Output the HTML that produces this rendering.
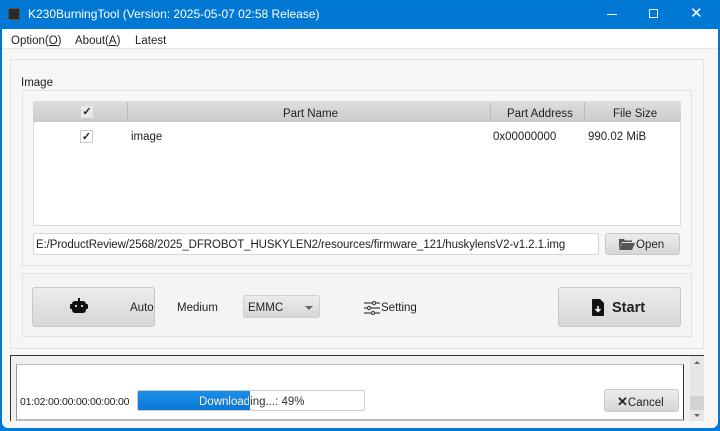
<!DOCTYPE html>
<html><head><meta charset="utf-8"><style>
*{margin:0;padding:0;box-sizing:border-box}
body{width:720px;height:431px;overflow:hidden;background:#0078d4;font-family:"Liberation Sans",sans-serif;font-size:11px;color:#222;position:relative}
.a{position:absolute}
.btn{background:linear-gradient(#ececec,#d6d6d6);border:1px solid #c8c8c8;border-radius:3px}
</style></head><body>
<div class="a" style="left:0;top:0;width:720px;height:29px;background:#0078d4"></div>
<div class="a" style="left:8px;top:8px;width:12px;height:12px;background:#2b2b2b;border:1px solid #555"></div>
<div class="a" style="left:28px;top:7px;color:#fff;font-size:12px">K230BurningTool (Version: 2025-05-07 02:58 Release)</div>
<div class="a" style="left:607px;top:14px;width:10px;height:1px;background:#fff"></div>
<div class="a" style="left:649px;top:9px;width:9px;height:9px;border:1px solid #fff"></div>
<div class="a" style="left:690px;top:4px;color:#fff;font-size:15px">✕</div>
<div class="a" style="left:2px;top:29px;width:716px;height:399px;background:#f7f7f7;border-radius:0 0 6px 6px"></div>
<div class="a" style="left:2px;top:29px;width:716px;height:20px;background:#fff;border-bottom:1px solid #e6e6e6"></div>
<div class="a" style="left:11px;top:35px;font-size:11.5px">Option(<u>O</u>)</div>
<div class="a" style="left:75px;top:35px;font-size:11.5px">About(<u>A</u>)</div>
<div class="a" style="left:135px;top:35px;font-size:11.5px">Latest</div>
<div class="a" style="left:10px;top:59px;width:694px;height:290px;border:1px solid #e4e4e4;background:#f6f6f6"></div>
<div class="a" style="left:21px;top:77px;font-size:11.5px">Image</div>
<div class="a" style="left:22px;top:90px;width:670px;height:176px;border:1px solid #e2e2e2;background:#f7f7f7"></div>
<div class="a" style="left:33px;top:101px;width:648px;height:125px;background:#fff;border:1px solid #ddd"></div>
<div class="a" style="left:33px;top:101px;width:648px;height:21px;background:linear-gradient(#dedede,#cbcbcb)"></div>
<div class="a" style="left:127px;top:102px;width:1px;height:20px;background:#bbb"></div>
<div class="a" style="left:490px;top:102px;width:1px;height:20px;background:#bbb"></div>
<div class="a" style="left:584px;top:102px;width:1px;height:20px;background:#bbb"></div>
<div class="a" style="left:81px;top:106px;width:12px;height:12px;background:#e8e8e8;font-size:11px;line-height:12px;text-align:center;font-weight:bold">✓</div>
<div class="a" style="left:283px;top:108px;font-size:11.5px">Part Name</div>
<div class="a" style="left:507px;top:108px;font-size:11.5px">Part Address</div>
<div class="a" style="left:613px;top:108px;font-size:11.5px">File Size</div>
<div class="a" style="left:80px;top:130px;width:13px;height:13px;border:1px solid #ccc;background:#fff;font-size:11px;line-height:12px;text-align:center;font-weight:bold">✓</div>
<div class="a" style="left:131px;top:131px;font-size:11.5px">image</div>
<div class="a" style="left:493px;top:131px;font-size:11.5px">0x00000000</div>
<div class="a" style="left:588px;top:131px;font-size:11.5px">990.02 MiB</div>
<div class="a" style="left:33px;top:233px;width:566px;height:22px;background:#fff;border:1px solid #d6d6d6;border-radius:2px"></div>
<div class="a" style="left:36px;top:239px;font-size:11.5px;letter-spacing:-0.1px">E:/ProductReview/2568/2025_DFROBOT_HUSKYLEN2/resources/firmware_121/huskylensV2-v1.2.1.img</div>
<div class="a btn" style="left:605px;top:233px;width:75px;height:22px"></div>
<svg class="a" style="left:619px;top:238px" width="16" height="12" viewBox="0 0 16 12"><path d="M0 1H5L6 2.5H13V4H3L0 11Z" fill="#555"/><path d="M3 5H16L13 12H0Z" fill="#555"/></svg>
<div class="a" style="left:636px;top:239px;font-size:11.5px">Open</div>
<div class="a" style="left:22px;top:273px;width:670px;height:64px;border:1px solid #e2e2e2;background:#f4f4f4"></div>
<div class="a btn" style="left:32px;top:287px;width:123px;height:40px"></div>
<div class="a" style="left:72px;top:301px;width:14px;height:12px;background:#111;border-radius:3px"></div>
<div class="a" style="left:70px;top:304px;width:18px;height:5px;background:#111;border-radius:1px"></div>
<div class="a" style="left:78px;top:298px;width:2px;height:3px;background:#111"></div>
<div class="a" style="left:75px;top:305px;width:2px;height:2px;background:#ccc"></div>
<div class="a" style="left:81px;top:305px;width:2px;height:2px;background:#ccc"></div>
<div class="a" style="left:130px;top:302px;font-size:11.5px">Auto</div>
<div class="a" style="left:177px;top:302px;font-size:11.5px">Medium</div>
<div class="a btn" style="left:243px;top:295px;width:77px;height:23px;border-color:#d0d0d0"></div>
<div class="a" style="left:248px;top:302px;font-size:11.5px">EMMC</div>
<div class="a" style="left:305px;top:306px;width:0;height:0;border-left:4px solid transparent;border-right:4px solid transparent;border-top:4px solid #666"></div>
<svg class="a" style="left:364px;top:301px" width="17" height="14" viewBox="0 0 17 14" fill="none" stroke="#444" stroke-width="1.2"><path d="M0 2H16M0 7H16M0 12H16"/><circle cx="10" cy="2" r="1.6" fill="#f4f4f4"/><circle cx="5" cy="7" r="1.6" fill="#f4f4f4"/><circle cx="9" cy="12" r="1.6" fill="#f4f4f4"/></svg>
<div class="a" style="left:381px;top:302px;font-size:11.5px">Setting</div>
<div class="a btn" style="left:558px;top:287px;width:123px;height:40px"></div>
<svg class="a" style="left:592px;top:299px" width="12" height="17" viewBox="0 0 12 17"><path d="M0 1Q0 0 1 0H8L12 4V16Q12 17 11 17H1Q0 17 0 16Z" fill="#111"/><path d="M6 7V12M3.5 10L6 12.5L8.5 10" stroke="#fff" stroke-width="1.5" fill="none"/></svg>
<div class="a" style="left:612px;top:300px;font-size:14.5px;font-weight:bold">Start</div>
<div class="a" style="left:10px;top:355px;width:694px;height:66px;border-top:1px solid #333;border-left:1px solid #333;background:#f0f0f0"></div>
<div class="a" style="left:16px;top:364px;width:668px;height:57px;background:#fff;border:1px solid #999;border-top:1px solid #bbb;border-right:1px solid #333;border-bottom:2px solid #bbb"></div>
<div class="a" style="left:690px;top:356px;width:14px;height:65px;background:#e6e6e6"></div>
<div class="a" style="left:690px;top:396px;width:14px;height:14px;background:#d2d2d2"></div>
<div class="a" style="left:694px;top:361px;border-left:3px solid transparent;border-right:3px solid transparent;border-bottom:3px solid #666"></div>
<div class="a" style="left:694px;top:414px;border-left:3px solid transparent;border-right:3px solid transparent;border-top:3px solid #666"></div>
<div class="a" style="left:20px;top:396px;font-size:10.5px;letter-spacing:-0.2px">01:02:00:00:00:00:00:00</div>
<div class="a" style="left:137px;top:390px;width:228px;height:21px;background:#fff;border:1px solid #ccc;border-radius:2px;overflow:hidden">
<div style="width:112px;height:100%;background:linear-gradient(#1a8fe8,#0a78d6)"></div></div>
<div class="a" style="left:199px;top:396px;font-size:11.5px;color:#333">Downloading...: 49%</div>
<div class="a" style="left:199px;top:396px;width:50px;overflow:hidden;white-space:nowrap;font-size:11.5px;color:#fff">Downloading...: 49%</div>
<div class="a btn" style="left:604px;top:389px;width:75px;height:23px"></div>
<div class="a" style="left:617px;top:394px;font-size:11.5px"><b style="font-size:13px">✕</b>Cancel</div>
</body></html>
